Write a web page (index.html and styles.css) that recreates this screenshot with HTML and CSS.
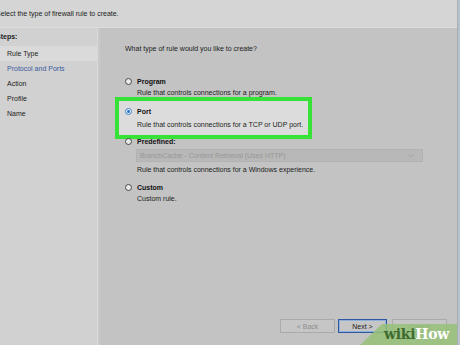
FILE: index.html
```html
<!DOCTYPE html>
<html lang="en">
<head>
    <meta charset="UTF-8">
    <meta name="viewport" content="width=device-width, initial-scale=1.0">
    <title>New Inbound Rule Wizard</title>
    <link rel="stylesheet" href="styles.css">
</head>
<body>
    <div class="window">
        <div class="header">
            <div class="title">Rule Type</div>
            <div class="subtitle">Select the type of firewall rule to create.</div>
        </div>

        <div class="content">
            <div class="steps">
                <div class="steps-title">Steps:</div>
                <div class="step done">Rule Type</div>
                <div class="step current">Protocol and Ports</div>
                <div class="step">Action</div>
                <div class="step">Profile</div>
                <div class="step">Name</div>
            </div>

            <div class="panel">
                <div class="question">What type of rule would you like to create?</div>

                <div class="option opt-program">
                    <div class="option-row"><span class="radio"></span><span class="option-label">Program</span></div>
                    <div class="option-desc">Rule that controls connections for a program.</div>
                </div>

                <div class="option opt-port highlight">
                    <div class="option-row"><span class="radio checked"></span><span class="option-label">Port</span></div>
                    <div class="option-desc">Rule that controls connections for a TCP or UDP port.</div>
                </div>

                <div class="option opt-predefined">
                    <div class="option-row"><span class="radio"></span><span class="option-label">Predefined:</span></div>
                    <div class="select">
                        <span>BranchCache - Content Retrieval (Uses HTTP)</span>
                        <svg class="select-arrow" width="6" height="4" viewBox="0 0 6 4"><path d="M0.5 0.5 L3 3 L5.5 0.5" fill="none" stroke="#a4a4a4" stroke-width="1"/></svg>
                    </div>
                    <div class="option-desc">Rule that controls connections for a Windows experience.</div>
                </div>

                <div class="option opt-custom">
                    <div class="option-row"><span class="radio"></span><span class="option-label">Custom</span></div>
                    <div class="option-desc">Custom rule.</div>
                </div>

                <div class="buttons">
                    <button class="btn disabled">&lt; Back</button>
                    <button class="btn primary">Next &gt;</button>
                    <button class="btn cancel">Cancel</button>
                </div>
            </div>
        </div>

        <div class="watermark"><span class="wm-wiki">wiki</span><span class="wm-how">How</span></div>
    </div>
</body>
</html>
```

FILE: styles.css
```css
html {
    background: #b9c1c8;
}

body {
    margin: 0;
    width: 460px;
    height: 345px;
    overflow: hidden;
    font-family: "Liberation Sans", Arial, sans-serif;
    font-size: 7px;
    color: #1c1c1c;
}

.window {
    position: relative;
    width: 461px;
    height: 345px;
    margin-left: -4px;
    display: flex;
    flex-direction: column;
    border-right: 1px solid #a6aeb6;
    overflow: hidden;
}

.header {
    height: 36px;
    margin-top: -9px;
    background: #d5d5d5;
    border-bottom: 1px solid #dcdcdc;
    flex-shrink: 0;
}

.title {
    font-weight: bold;
    font-size: 8px;
    line-height: 10px;
    padding-left: 3px;
}

.subtitle {
    line-height: 11px;
    margin-top: 7px;
}

.content {
    flex: 1;
    display: flex;
    min-height: 0;
}

.steps {
    width: 101px;
    background: #d1d1d1;
    border-right: 1px solid #d9d9d9;
    padding-top: 3px;
}

.steps-title {
    font-weight: bold;
    line-height: 11px;
    margin-bottom: 4px;
}

.step {
    line-height: 15px;
    padding-left: 11px;
}

.step.done {
    background: #dadada;
}

.step.current {
    color: #3a5a9c;
}

.panel {
    flex: 1;
    display: flex;
    flex-direction: column;
    background: #c3c3c3;
    border-left: 2px solid #c9c9c9;
    padding: 15px 0 12px 25px;
}

.question {
    line-height: 11px;
}

.option-row {
    display: flex;
    align-items: center;
    height: 11px;
}

.option-label {
    font-weight: bold;
    color: #111;
}

.option-desc {
    line-height: 11px;
    padding-left: 12px;
}

.radio {
    width: 7px;
    height: 7px;
    box-sizing: border-box;
    border: 1px solid #4a4a4a;
    border-radius: 50%;
    background: #e9e9e9;
    margin-right: 5px;
    display: flex;
    align-items: center;
    justify-content: center;
}

.radio.checked {
    border-color: #3c7fc4;
    background: #eef4fb;
}

.radio.checked::after {
    content: "";
    width: 3px;
    height: 3px;
    border-radius: 50%;
    background: #1e6fd0;
}

.opt-program {
    margin-top: 22px;
}

.highlight {
    width: 197px;
    box-sizing: border-box;
    margin-left: -10px;
    margin-top: -1px;
    padding: 5px 0 5px 6px;
    border: 4px solid #36e236;
    background: #dcdcdc;
}

.highlight .option-desc {
    margin-top: 2px;
}

.opt-predefined {
    margin-top: -3px;
}

.select {
    display: flex;
    align-items: center;
    justify-content: space-between;
    width: 287px;
    height: 13px;
    box-sizing: border-box;
    margin: 2px 0 2px 11px;
    padding: 0 8px 0 3px;
    background: #b8b8b8;
    border: 1px solid #b2b2b2;
    color: #979797;
}

.opt-custom {
    margin-top: 7px;
}

.buttons {
    margin-top: auto;
    display: flex;
    justify-content: flex-end;
    padding-right: 10px;
}

.btn {
    height: 14px;
    box-sizing: border-box;
    font-family: inherit;
    font-size: 7px;
    padding: 0;
    background: #c6c6c6;
    border: 1px solid #aaaaaa;
    color: #1c1c1c;
}

.btn.disabled {
    width: 55px;
    color: #8d8d8d;
}

.btn.primary {
    width: 49px;
    margin-left: 3px;
    border: 1px solid #2c58a0;
    box-shadow: inset 0 0 0 1px #8fb0d8;
}

.btn.cancel {
    width: 55px;
    margin-left: 5px;
    color: #8d8d8d;
}

.watermark {
    position: absolute;
    right: -1px;
    bottom: 0;
    width: 98px;
    height: 21px;
    padding-left: 24px;
    box-sizing: border-box;
    background: rgba(150, 192, 120, 0.85);
    clip-path: polygon(22px 0, 100% 0, 100% 100%, 0 100%);
    font-family: "DejaVu Serif", "Liberation Serif", serif;
    font-weight: bold;
    font-size: 14px;
    line-height: 21px;
    letter-spacing: -0.3px;
}

.wm-wiki {
    color: #3d6b2f;
}

.wm-how {
    color: #ffffff;
}
```
